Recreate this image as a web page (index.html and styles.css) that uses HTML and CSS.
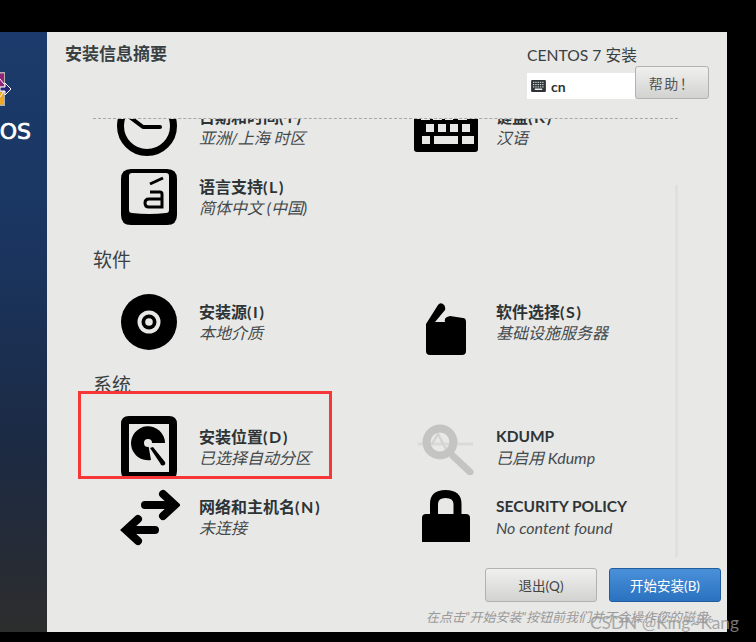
FILE: index.html
```html
<!DOCTYPE html>
<html lang="zh-CN">
<head>
    <meta charset="UTF-8">
    <title>安装信息摘要</title>
    <link rel="stylesheet" href="styles.css">
</head>
<body>
    <div class="screen">
        <div class="sidebar">
            <svg class="logo" width="12" height="36" viewBox="0 0 12 36">
                <path d="M0 0H5V16H0Z" fill="#b0b0b0"/>
                <path d="M0 1.500H4V14.500H0Z" fill="#932279"/>
                <path d="M0 19H5V34H0Z" fill="#b0b0b0"/>
                <path d="M0 20H4V32.500H0Z" fill="#efa724"/>
                <path d="M0 7L4 12M4 19L0 25" stroke="#fff" stroke-width="1" fill="none"/>
                <path d="M0 15H5V11L11 17L5 23V19H0Z" fill="#262577" stroke="#fff" stroke-width="1"/>
            </svg>
            <div class="logo-name">OS</div>
        </div>
        <div class="main">
            <div class="header">
                <h1>安装信息摘要</h1>
                <div class="header-right">
                    <div class="product">CENTOS 7 安装</div>
                    <div class="header-tools">
                        <div class="layout">
                            <svg width="15" height="12" viewBox="0 0 16 13">
                                <path d="M1 0H15Q16 0 16 1V12Q16 13 15 13H1Q0 13 0 12V1Q0 0 1 0Z" fill="#2e3436"/>
                                <path d="M2 2.500H14M2 5H14M2 7.500H14" stroke="#fff" stroke-dasharray="1.500 1" fill="none"/>
                                <path d="M4 10H12" stroke="#fff" stroke-width="1.500"/>
                            </svg>
                            <span>cn</span>
                        </div>
                        <button class="btn help">帮助！</button>
                    </div>
                </div>
            </div>
            <div class="spokes">
                <div class="spokes-inner">
                    <div class="grid">
                        <div class="spoke">
                            <div class="icon">
                                <svg width="64" height="63" viewBox="0 0 64 63">
                                    <circle cx="30" cy="30" r="26.500" fill="none" stroke="#000" stroke-width="7"/>
                                    <path d="M14 22L26 31H43" fill="none" stroke="#000" stroke-width="4" stroke-linecap="round" stroke-linejoin="round"/>
                                </svg>
                            </div>
                            <div class="text"><b>日期和时间<span class="key">(T)</span></b><i>亚洲/上海 时区</i></div>
                        </div>
                        <div class="spoke">
                            <div class="icon">
                                <svg width="64" height="71" viewBox="0 0 64 71">
                                    <path d="M3 0H61Q64 0 64 3V57Q64 60 61 60H3Q0 60 0 57V3Q0 0 3 0Z" fill="#000"/>
                                    <path d="M7 20H16V28H7ZM19 20H28V28H19ZM31 20H39V28H31ZM44 20H53V28H44Z" fill="#e8e8e7"/>
                                    <path d="M12 32H20V40H12ZM24 32H32V40H24ZM36 32H44V40H36ZM48 32H56V40H48ZM8 44H16V52H8ZM20 44H44V52H20ZM48 44H60V52H48Z" fill="#e8e8e7"/>
                                </svg>
                            </div>
                            <div class="text"><b>键盘<span class="key">(K)</span></b><i>汉语</i></div>
                        </div>
                        <div class="spoke">
                            <div class="icon">
                                <svg width="56" height="56" viewBox="0 0 56 56">
                                    <path fill-rule="evenodd" d="M10 0H46Q56 0 56 10V46Q56 56 46 56H10Q0 56 0 46V10Q0 0 10 0ZM11 4Q8 4 8 7V41Q8 44 11 44Q28 46 45 44Q48 44 48 41V7Q48 4 45 4Z" fill="#000"/>
                                    <path d="M29 15L42 9" stroke="#000" stroke-width="3" fill="none"/>
                                    <path d="M29 23H39Q41 23 41 25V38H28Q24 38 24 34Q24 30 28 30H41" stroke="#000" stroke-width="3" fill="none"/>
                                </svg>
                            </div>
                            <div class="text"><b>语言支持<span class="key">(L)</span></b><i>简体中文 (中国)</i></div>
                        </div>
                    </div>
                    <h2>软件</h2>
                    <div class="grid">
                        <div class="spoke">
                            <div class="icon">
                                <svg width="56" height="56" viewBox="0 0 56 56">
                                    <circle cx="28" cy="28" r="28" fill="#000"/>
                                    <circle cx="28" cy="28" r="11.500" fill="#e8e8e7"/>
                                    <circle cx="28" cy="28" r="7.500" fill="#000"/>
                                    <circle cx="28" cy="28" r="3.800" fill="#e8e8e7"/>
                                </svg>
                            </div>
                            <div class="text"><b>安装源<span class="key">(I)</span></b><i>本地介质</i></div>
                        </div>
                        <div class="spoke">
                            <div class="icon">
                                <svg class="low" width="40" height="52" viewBox="0 0 40 52">
                                    <path d="M0 21L12 2Q14 -1 17 1Q20 3 19 7L9 19H19Q18 15 21 14L24 13L37 15Q40 15 40 19V48Q40 52 36 52H4Q0 52 0 48Z" fill="#000"/>
                                </svg>
                            </div>
                            <div class="text"><b>软件选择<span class="key">(S)</span></b><i>基础设施服务器</i></div>
                        </div>
                    </div>
                    <h2>系统</h2>
                    <div class="grid">
                        <div class="spoke">
                            <div class="icon">
                                <svg width="56" height="63" viewBox="0 0 56 63">
                                    <path fill-rule="evenodd" d="M8 0H48Q56 0 56 8V55Q56 63 48 63H8Q0 63 0 55V8Q0 0 8 0ZM8 8V56H48V8Z" fill="#000"/>
                                    <path d="M44 27A17 17 0 1 0 30 44L27 27Z" fill="#000"/>
                                    <circle cx="27" cy="27" r="4" fill="#e8e8e7"/>
                                    <path d="M29 32L32 31L44 46Q45 49 42 49.500Q40 50 39 47Z" fill="#000"/>
                                </svg>
                            </div>
                            <div class="text"><b>安装位置<span class="key">(D)</span></b><i>已选择自动分区</i></div>
                        </div>
                        <div class="spoke">
                            <div class="icon">
                                <svg width="56" height="56" viewBox="0 0 56 56" fill="none">
                                    <path d="M0 25H55" stroke="#dadad9" stroke-width="3"/>
                                    <path d="M10 25H14L20 15L29 32L32 25H35" stroke="#d4d4d3" stroke-width="2.500"/>
                                    <circle cx="22" cy="23" r="13.500" stroke="#c4c4c3" stroke-width="8"/>
                                    <path d="M35 37L52 53" stroke="#c4c4c3" stroke-width="7" stroke-linecap="round"/>
                                </svg>
                            </div>
                            <div class="text"><b class="latin">KDUMP</b><i>已启用 Kdump</i></div>
                        </div>
                        <div class="spoke">
                            <div class="icon">
                                <svg width="62" height="57" viewBox="-1 0 62 57" fill="none" stroke="#000" stroke-width="8" stroke-linecap="round">
                                    <path d="M26 16H54M44 5L56 16L44 27"/>
                                    <path d="M36 41H8M19 30L7 41L19 52"/>
                                </svg>
                            </div>
                            <div class="text"><b>网络和主机名<span class="key">(N)</span></b><i>未连接</i></div>
                        </div>
                        <div class="spoke">
                            <div class="icon">
                                <svg width="48" height="55" viewBox="0 0 48 55">
                                    <path d="M4 24H44Q48 24 48 28V52H0V28Q0 24 4 24Z" fill="#000"/>
                                    <path d="M12 26V14Q12 4 23.500 4Q35.500 4 35.500 14V26" fill="none" stroke="#000" stroke-width="8"/>
                                </svg>
                            </div>
                            <div class="text"><b class="latin">SECURITY POLICY</b><i>No content found</i></div>
                        </div>
                    </div>
                </div>
                <div class="scrollbar"></div>
            </div>
            <div class="actions">
                <button class="btn quit">退出(Q)</button>
                <button class="btn begin">开始安装(B)</button>
            </div>
            <div class="warning">在点击"开始安装"按钮前我们并不会操作您的磁盘。</div>
        </div>
    </div>
    <div class="red-box"></div>
    <div class="watermark">CSDN @King~Kang</div>
</body>
</html>
```
FILE: styles.css
```css
*{
    box-sizing: border-box;
}
body{
    margin: 0;
    width: 756px;
    height: 642px;
    overflow: hidden;
    background: #000;
    padding-top: 32px;
    font-family: Lato, "Noto Sans CJK SC", sans-serif;
    color: #2e3436;
    position: relative;
}
.screen{
    display: flex;
    width: 727px;
    height: 600px;
}
.sidebar{
    width: 47px;
    background: linear-gradient(#1b3b6c 0%, #1a3560 35%, #1c2a42 70%, #2d2d2d 100%);
    padding-top: 40px;
    overflow: hidden;
}
.logo{
    display: block;
}
.logo-name{
    display: flex;
    justify-content: flex-end;
    color: #fff;
    font: 22px/20px "DejaVu Sans", sans-serif;
    -webkit-text-stroke: 0.7px #fff;
    width: 31px;
    margin-top: 14px;
}
.main{
    width: 680px;
    background: #e8e8e7;
    display: flex;
    flex-direction: column;
}
.header{
    display: flex;
    justify-content: space-between;
    height: 86px;
    padding: 12px 18px 0;
}
h1{
    margin: 0;
    font-size: 17px;
    line-height: 20px;
    font-weight: bold;
    color: #3a3f41;
}
.header-right{
    width: 182px;
}
.product{
    font-size: 15.7px;
    line-height: 20px;
    margin-top: 1px;
    color: #3a3f41;
}
.header-tools{
    display: flex;
    align-items: flex-end;
    margin-top: 1px;
}
.layout{
    width: 108px;
    height: 26px;
    background: #fff;
    display: flex;
    align-items: center;
    gap: 5px;
    padding-left: 4px;
    font-size: 14px;
    font-weight: bold;
    color: #2e3436;
}
.btn{
    font-family: inherit;
    font-size: 14px;
    color: #2e3436;
    border: 1px solid #b0b3ae;
    border-radius: 3px;
    background: linear-gradient(#f0f0ef, #d2d2d0);
    padding: 0;
}
.help{
    width: 74px;
    height: 33px;
    color: #555;
    letter-spacing: 1.500px;
}
.spokes{
    position: relative;
    height: 442px;
    margin: 0 49px 0 46px;
    border-top: 1px dashed #a8a8a8;
    overflow: hidden;
}
.spokes-inner{
    margin-top: -27px;
}
.grid{
    display: grid;
    grid-template-columns: 297px 287px;
    grid-auto-rows: 70px;
}
h2{
    margin: 0;
    font-size: 19px;
    font-weight: normal;
    line-height: 24px;
    height: 55px;
    padding-top: 16px;
    color: #3a3f41;
}
.spoke{
    display: flex;
    align-items: center;
}
.icon{
    width: 106px;
    height: 56px;
    padding-left: 6px;
    display: flex;
    align-items: center;
    justify-content: center;
    flex-shrink: 0;
}
.low{
    margin-top: 13px;
}
.text b{
    display: block;
    font-size: 16px;
    line-height: 21px;
    font-weight: bold;
}
.text b.latin{
    font-size: 15.500px;
}
.key{
    letter-spacing: 1.700px;
}
.text i{
    display: block;
    font-size: 16px;
    line-height: 21px;
    color: #444a4c;
}
.scrollbar{
    position: absolute;
    right: 0;
    top: 66px;
    bottom: 3px;
    width: 3px;
    background: #e0e0df;
}
.actions{
    display: flex;
    justify-content: flex-end;
    gap: 12px;
    padding: 8px 6px 0 0;
}
.actions .btn{
    width: 112px;
    height: 34px;
    font-size: 13.500px;
}
.quit{
    color: #444;
}
.begin{
    background: linear-gradient(#4a90d9, #2a72c0);
    border-color: #215d9c;
    color: #fff !important;
}
.warning{
    font-size: 13px;
    font-style: italic;
    color: #9a9a9a;
    text-align: right;
    padding: 6px 6px 0 0;
    line-height: 18px;
}
.red-box{
    position: absolute;
    left: 78px;
    top: 391px;
    width: 254px;
    height: 88px;
    border: 3px solid #f73737;
}
.watermark{
    position: absolute;
    left: 590px;
    top: 613px;
    font-size: 17.300px;
    line-height: 20px;
    color: rgba(150, 150, 150, 0.8);
}
```
